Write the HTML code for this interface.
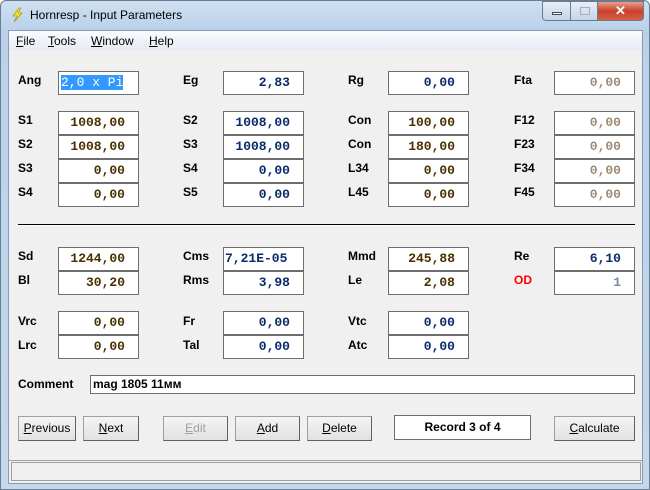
<!DOCTYPE html>
<html><head><meta charset="utf-8"><style>
*{margin:0;padding:0;box-sizing:border-box}
body{width:650px;height:490px;overflow:hidden;background:#fff;font-family:"Liberation Sans",sans-serif;position:relative}
.win{position:absolute;left:0;top:0;width:650px;height:490px;background:linear-gradient(#cfe0f1,#b9d1ea 30px,#c4d8ee);border:1px solid #6b7c8f;border-radius:6px 6px 0 0}
.title{position:absolute;left:29px;top:7px;font-size:12px;color:#000}
.client{position:absolute;left:7px;top:29px;width:635px;height:454px;background:#f0f0f0;border:1px solid #8a9bb0}
.menu{position:absolute;left:0;top:0;width:633px;height:19px;background:linear-gradient(#fbfcfe,#e6ecf5);font-size:12px}
.menu span{position:absolute;top:3px}
.menu u{text-decoration:underline}
.l{position:absolute;font-size:12px;font-weight:bold;color:#000}
.b{position:absolute;width:81px;height:24px;background:#fff;border:1px solid #6d6d6d;font-family:"Liberation Mono",monospace;font-size:13px;font-weight:bold;text-align:right;padding:4px 13px 0 0;line-height:14px}
.c1{color:#4a3000}.c2{color:#0a2a6a}.c4{color:#a08a70}
.btn{position:absolute;top:384px;height:25px;background:linear-gradient(#f4f4f4,#e2e2e2);border:1px solid #a0a0a0;border-right-color:#606060;border-bottom-color:#606060;font-size:12px;text-align:center;line-height:22px;font-family:"Liberation Sans Narrow","Liberation Sans",sans-serif}
.cb{position:absolute;top:0;height:20px;border:1px solid #6b7c8f}
</style></head><body>
<div class="win">
<svg style="position:absolute;left:8px;top:6px" width="16" height="16" viewBox="0 0 16 16"><path d="M10 1 L4 9 L8 9 L5 15 L13 6 L9 6 L12 1Z" fill="#f3e22a" stroke="#9a8a00" stroke-width=".6"/></svg>
<div class="title">Hornresp - Input Parameters</div>
<div class="cb" style="left:541px;width:29px;background:linear-gradient(#e6eef8,#c6d5e6);border-radius:0 0 0 4px"><div style="position:absolute;left:9px;top:10px;width:10px;height:3px;background:#fff;border:1px solid #445"></div></div>
<div class="cb" style="left:569px;width:28px;background:linear-gradient(#e6eef8,#c6d5e6)"><div style="position:absolute;left:9px;top:5px;width:10px;height:8px;border:1px solid #aab"></div></div>
<div class="cb" style="left:596px;width:47px;background:linear-gradient(#e8a090,#c8402a 50%,#d86048);border-radius:0 0 4px 0;color:#fff;font-weight:bold;text-align:center;font-size:13px;line-height:17px">✕</div>
<div class="client">
<div class="menu"><span style="left:7px"><u>F</u>ile</span><span style="left:39px"><u>T</u>ools</span><span style="left:82px"><u>W</u>indow</span><span style="left:140px"><u>H</u>elp</span></div>
<div class="l" style="left:9px;top:42px">Ang</div>
<div class="b" style="left:49px;top:40px;text-align:left;padding-left:2px;font-weight:normal"><span style="background:#3399ff;color:#fff">2,0 x Pi</span></div>
<div class="l" style="left:174px;top:42px">Eg</div><div class="b c2" style="left:214px;top:40px">2,83</div>
<div class="l" style="left:339px;top:42px">Rg</div><div class="b c2" style="left:379px;top:40px">0,00</div>
<div class="l" style="left:505px;top:42px">Fta</div><div class="b c4" style="left:545px;top:40px">0,00</div>

<div class="l" style="left:9px;top:82px">S1</div><div class="b c1" style="left:49px;top:80px">1008,00</div>
<div class="l" style="left:9px;top:106px">S2</div><div class="b c1" style="left:49px;top:104px">1008,00</div>
<div class="l" style="left:9px;top:130px">S3</div><div class="b c1" style="left:49px;top:128px">0,00</div>
<div class="l" style="left:9px;top:154px">S4</div><div class="b c1" style="left:49px;top:152px">0,00</div>

<div class="l" style="left:174px;top:82px">S2</div><div class="b c2" style="left:214px;top:80px">1008,00</div>
<div class="l" style="left:174px;top:106px">S3</div><div class="b c2" style="left:214px;top:104px">1008,00</div>
<div class="l" style="left:174px;top:130px">S4</div><div class="b c2" style="left:214px;top:128px">0,00</div>
<div class="l" style="left:174px;top:154px">S5</div><div class="b c2" style="left:214px;top:152px">0,00</div>

<div class="l" style="left:339px;top:82px">Con</div><div class="b c1" style="left:379px;top:80px">100,00</div>
<div class="l" style="left:339px;top:106px">Con</div><div class="b c1" style="left:379px;top:104px">180,00</div>
<div class="l" style="left:339px;top:130px">L34</div><div class="b c1" style="left:379px;top:128px">0,00</div>
<div class="l" style="left:339px;top:154px">L45</div><div class="b c1" style="left:379px;top:152px">0,00</div>

<div class="l" style="left:505px;top:82px">F12</div><div class="b c4" style="left:545px;top:80px">0,00</div>
<div class="l" style="left:505px;top:106px">F23</div><div class="b c4" style="left:545px;top:104px">0,00</div>
<div class="l" style="left:505px;top:130px">F34</div><div class="b c4" style="left:545px;top:128px">0,00</div>
<div class="l" style="left:505px;top:154px">F45</div><div class="b c4" style="left:545px;top:152px">0,00</div>

<div style="position:absolute;left:9px;top:193px;width:617px;height:2px;border-top:1px solid #000;border-bottom:1px solid #fff"></div>

<div class="l" style="left:9px;top:218px">Sd</div><div class="b c1" style="left:49px;top:216px">1244,00</div>
<div class="l" style="left:9px;top:242px">Bl</div><div class="b c1" style="left:49px;top:240px">30,20</div>
<div class="l" style="left:174px;top:218px">Cms</div><div class="b c2" style="left:214px;top:216px;text-align:left;padding-left:1px">7,21E-05</div>
<div class="l" style="left:174px;top:242px">Rms</div><div class="b c2" style="left:214px;top:240px">3,98</div>
<div class="l" style="left:339px;top:218px">Mmd</div><div class="b c1" style="left:379px;top:216px">245,88</div>
<div class="l" style="left:339px;top:242px">Le</div><div class="b c1" style="left:379px;top:240px">2,08</div>
<div class="l" style="left:505px;top:218px">Re</div><div class="b c2" style="left:545px;top:216px">6,10</div>
<div class="l" style="left:505px;top:242px;color:#f00">OD</div><div class="b c4" style="left:545px;top:240px;color:#7a8aa0">1</div>

<div class="l" style="left:9px;top:283px">Vrc</div><div class="b c1" style="left:49px;top:280px">0,00</div>
<div class="l" style="left:9px;top:307px">Lrc</div><div class="b c1" style="left:49px;top:304px">0,00</div>
<div class="l" style="left:174px;top:283px">Fr</div><div class="b c2" style="left:214px;top:280px">0,00</div>
<div class="l" style="left:174px;top:307px">Tal</div><div class="b c2" style="left:214px;top:304px">0,00</div>
<div class="l" style="left:339px;top:283px">Vtc</div><div class="b c2" style="left:379px;top:280px">0,00</div>
<div class="l" style="left:339px;top:307px">Atc</div><div class="b c2" style="left:379px;top:304px">0,00</div>

<div class="l" style="left:9px;top:346px">Comment</div>
<div style="position:absolute;left:81px;top:344px;width:545px;height:19px;background:#fff;border:1px solid #6d6d6d;font-size:12px;font-weight:bold;padding:1px 0 0 2px">mag 1805 11мм</div>

<div class="btn" style="left:9px;top:385px;width:58px"><u>P</u>revious</div>
<div class="btn" style="left:74px;top:385px;width:56px"><u>N</u>ext</div>
<div class="btn" style="left:154px;top:385px;width:65px;color:#a0a0a0"><u>E</u>dit</div>
<div class="btn" style="left:226px;top:385px;width:65px"><u>A</u>dd</div>
<div class="btn" style="left:298px;top:385px;width:65px"><u>D</u>elete</div>
<div style="position:absolute;left:385px;top:384px;width:137px;height:25px;background:#fff;border:1px solid #6d6d6d;font-size:12px;font-weight:bold;text-align:center;line-height:23px">Record 3 of 4</div>
<div class="btn" style="left:545px;top:385px;width:81px"><u>C</u>alculate</div>

<div style="position:absolute;left:0;top:429px;width:633px;height:1px;background:#a0a0a0"></div>
<div style="position:absolute;left:2px;top:431px;width:630px;height:19px;border:1px solid #a0a0a0;background:#f0f0f0"></div>
</div>
</div>
</body></html>
